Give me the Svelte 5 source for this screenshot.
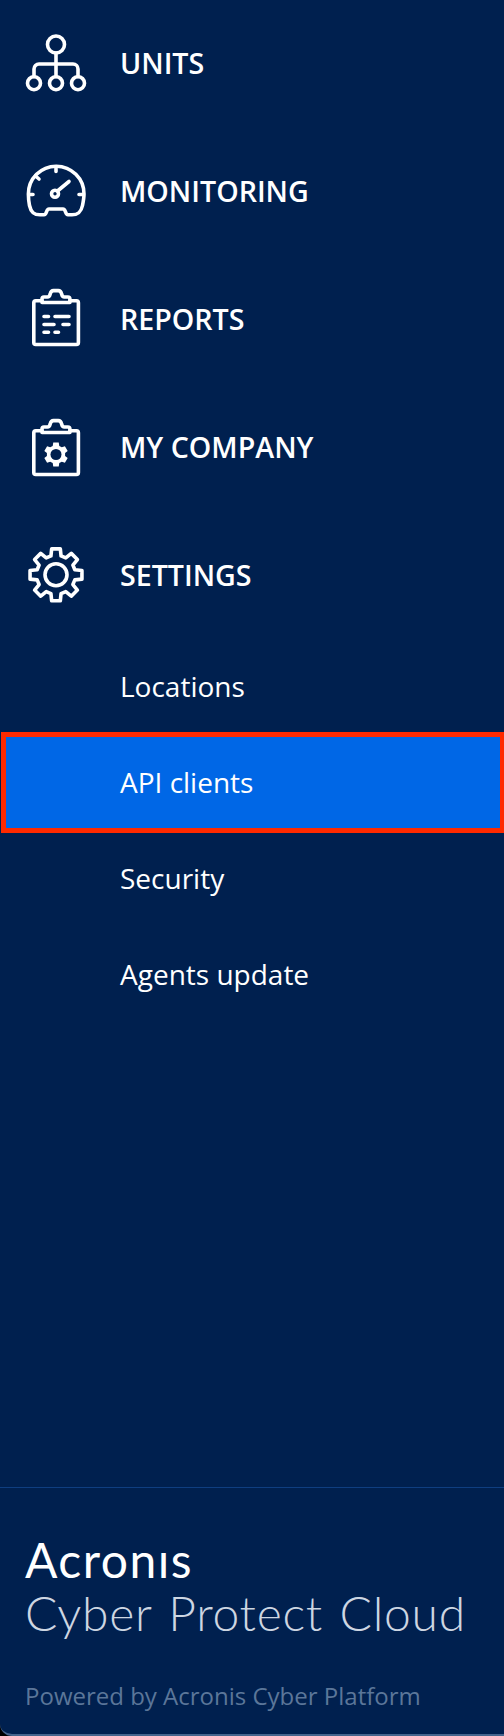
<script>
  const gear = (cx, cy, n, rOut, rIn, topHalf, baseHalf) => {
    const pts = [];
    for (let k = 0; k < n; k++) {
      const a = -90 + (k * 360) / n;
      for (const [r, d] of [[rIn, -baseHalf], [rOut, -topHalf], [rOut, topHalf], [rIn, baseHalf]]) {
        const t = ((a + d) * Math.PI) / 180;
        pts.push(`${(cx + r * Math.cos(t)).toFixed(2)} ${(cy + r * Math.sin(t)).toFixed(2)}`);
      }
    }
    return 'M' + pts.join('L') + 'Z';
  };
  const items = [
    { label: 'UNITS', view: '0 2.5 70 70' },
    { label: 'MONITORING', view: '0 0.5 70 70' },
    { label: 'REPORTS', view: '0 3.5 70 70' },
    { label: 'MY COMPANY', view: '0 1.5 70 70' },
    { label: 'SETTINGS', view: '0 -0.5 70 70' }
  ];
  const subs = ['Locations', 'API clients', 'Security', 'Agents update'];
  const bigGear = gear(36, 34.3, 8, 26.3, 19.5, 9.5, 15);
  const smallGear = gear(36, 44, 6, 12.2, 9.2, 13, 21);
</script>

{#snippet board()}
  <path d="M22 20.2h-6.2a2 2 0 0 0-2 2V62a2 2 0 0 0 2 2h40.6a2 2 0 0 0 2-2V22.2a2 2 0 0 0-2-2H50" />
  <path d="M22 22v-3.5a2 2 0 0 1 2-2h3.5c1.6 0 2.2-1 2.7-3 .5-2.4 1.3-3.4 3.3-3.4h4.8c2 0 2.8 1 3.3 3.4.5 2 1.100 3 2.700 3h3.600a2 2 0 0 1 2 2V22z" />
{/snippet}

<div class="side">
  <nav>
    {#each items as item, i}
      <div class="item">
        <svg class="icon" viewBox={item.view} fill="none" stroke="#fff" stroke-width="3.6" stroke-linecap="round" stroke-linejoin="round" aria-hidden="true">
          {#if i === 0}
            <circle cx="36" cy="19" r="8.5" />
            <path d="M36 27.500V51M14 51V43.500a5 5 0 0 1 5-5h34a5 5 0 0 1 5 5V51" />
            <circle cx="14" cy="57.700" r="6.500" />
            <circle cx="36" cy="57.700" r="6.500" />
            <circle cx="58" cy="57.700" r="6.500" />
          {:else if i === 1}
            <path d="M20 59.300C14 59.300 11 57 9.500 50 8.700 46 8.400 42 8.400 38.500a27.800 27.800 0 0 1 55.600 0c0 3.500-.7 7.500-1.500 11.500C61 57 58 59.300 52 59.300h-4c-3 0-2-5.800-5-5.800H29c-3 0-2 5.800-5 5.800z" />
            <circle cx="35" cy="38.300" r="3.500" />
            <path d="M37.500 35.500L49 26M36 13v3M15.500 20.500l3.500 3M10.500 39h2.500M59 39h3" />
          {:else if i === 2}
            {@render board()}
            <path d="M24 36h4.500M35 36h14M24 44h10M43 44h6M24 51.700h4.500M35 51.700h3.500" />
          {:else if i === 3}
            {@render board()}
            <path class="solid" d={smallGear} />
            <circle class="hole" cx="36" cy="44" r="5.500" />
          {:else}
            <path d={bigGear} />
            <circle cx="36" cy="34.300" r="11" />
          {/if}
        </svg>
        <span>{item.label}</span>
      </div>
    {/each}
  </nav>
  <div class="subs">
    {#each subs as s, i}
      <div class="sub" class:active={i === 1}>{s}</div>
    {/each}
  </div>
  <footer>
    <div class="brand" aria-label="Acronis">Acronıs</div>
    <div class="product">Cyber Protect Cloud</div>
    <div class="powered">Powered by Acronis Cyber Platform</div>
  </footer>
</div>

<style>
  :global(body) { margin: 0; background: #000; }
  .side {
    width: 504px; height: 1736px; background: #00204f; color: #fff;
    font-family: "Open Sans", sans-serif; display: flex; flex-direction: column;
    box-sizing: border-box; border-bottom: 2px solid #44648c; border-bottom-left-radius: 12px;
  }
  .item { height: 128px; box-sizing: border-box; padding-bottom: 3px; display: flex; align-items: center; }
  .icon { width: 70px; height: 70px; margin-left: 20px; margin-right: 30px; flex: none; }
  .solid { fill: #fff; stroke: none; }
  .hole { fill: #00204f; stroke: none; }
  .item span { font-size: 28.6px; font-weight: 600; }
  .subs { margin-top: -2px; }
  .sub { height: 96px; box-sizing: border-box; padding-left: 120px; display: flex; align-items: center; font-size: 28px; }
  .active {
    height: 101px; margin: -2.5px 0 -2.5px 1px; padding-left: 114px;
    background: #0067e6; border: 5px solid #ff2a00; border-right-width: 4.5px;
  }
  footer { margin-top: auto; border-top: 1px solid #0f3e80; padding: 48px 25px 22px; font-family: Lato, sans-serif; white-space: nowrap; }
  .brand { font-size: 48px; line-height: 48px; font-weight: 400; letter-spacing: 1.5px; }
  .product { font-size: 48px; line-height: 48px; font-weight: 300; letter-spacing: 0.7px; word-spacing: 3px; margin-top: 4.5px; color: #cdd6e2; }
  .powered { font-family: "Open Sans", sans-serif; font-size: 24px; color: #5b7699; margin-top: 42.5px; }
</style>
